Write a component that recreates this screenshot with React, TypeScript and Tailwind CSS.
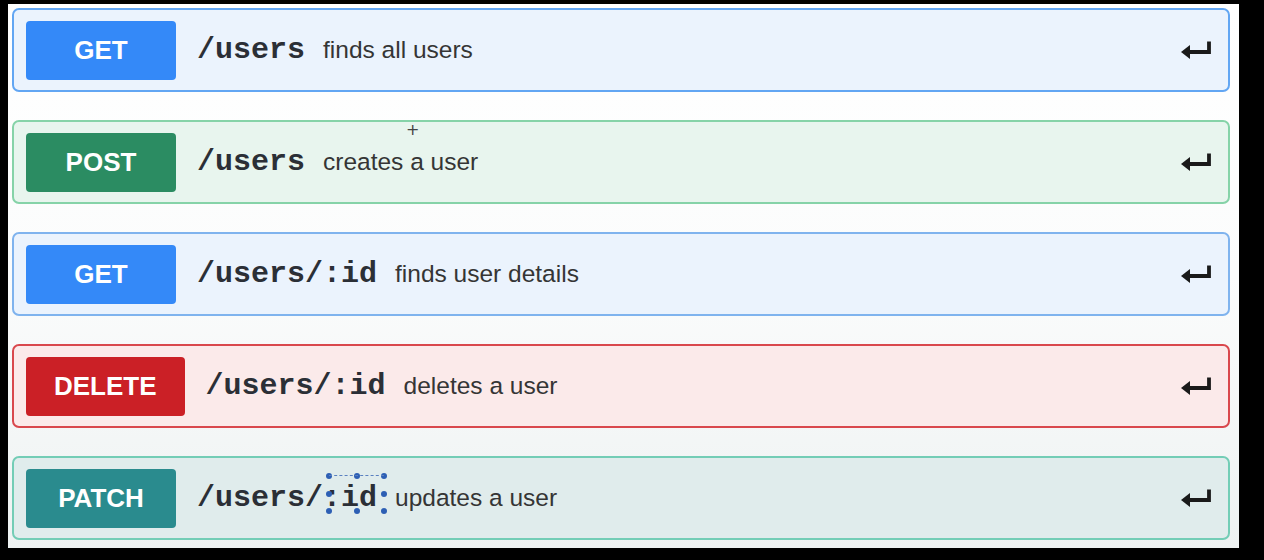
import React from "react";

type Row = {
  method: string;
  path: string;
  desc: string;
  badge: string;
  card: string;
  extra?: "cursor" | "select";
};

const rows: Row[] = [
  { method: "GET", path: "/users", desc: "finds all users", badge: "bg-[#3489f8]", card: "bg-[#ebf3fd] border-[#62a6f3]" },
  { method: "POST", path: "/users", desc: "creates a user", badge: "bg-[#2b8c62]", card: "bg-[#e8f5ee] border-[#86d3a8]", extra: "cursor" },
  { method: "GET", path: "/users/:id", desc: "finds user details", badge: "bg-[#3489f8]", card: "bg-[#ebf3fd] border-[#7fb3ee]" },
  { method: "DELETE", path: "/users/:id", desc: "deletes a user", badge: "bg-[#cb2026]", card: "bg-[#fbeaea] border-[#d9484d]" },
  { method: "PATCH", path: "/users/:id", desc: "updates a user", badge: "bg-[#2a8b8e]", card: "bg-[#e0ecec] border-[#73cdb6]", extra: "select" },
];

function EnterIcon() {
  return (
    <svg width="32" height="20" viewBox="0 0 32 20" className="shrink-0">
      <path d="M29 1.5 V12 H8" fill="none" stroke="#1a1a1a" strokeWidth="3.8" />
      <path d="M1 12 L10 5 L10 19 Z" fill="#1a1a1a" />
    </svg>
  );
}

function Dot() {
  return <span className="block w-[6px] h-[6px] rounded-full bg-[#2d5fb4]" />;
}

function SelectedId() {
  return (
    <span className="relative">
      :id
      <span className="absolute left-[3px] right-[-10px] top-[-8px] h-[41px] flex flex-col justify-between">
        <span className="relative flex justify-between items-center">
          <span className="absolute left-[3px] right-[3px] top-[2px] border-t border-dashed border-[#5a80c0]" />
          <Dot />
          <Dot />
          <Dot />
        </span>
        <span className="flex justify-between">
          <Dot />
          <Dot />
        </span>
        <span className="flex justify-between">
          <Dot />
          <Dot />
          <Dot />
        </span>
      </span>
    </span>
  );
}

export default function App() {
  return (
    <div className="w-[1264px] h-[560px] bg-black pt-[4px] pl-[8px] pr-[25px] pb-[12px] overflow-hidden">
      <div className="h-full bg-gradient-to-b from-white via-[#fbfcfc] to-[#eef2f2] pl-[4px] pr-[9px] pt-[4px] flex flex-col gap-[28px]">
        {rows.map((r, i) => (
          <div
            key={i}
            className={`relative h-[84px] shrink-0 border-2 rounded-[7px] flex items-center pl-[12px] pr-[16px] ${r.card}`}
          >
            <div
              className={`h-[59px] min-w-[150px] px-[28px] rounded-[4px] flex items-center justify-center text-white font-bold text-[26px] ${r.badge}`}
              style={{ fontFamily: '"Liberation Sans", Arial, sans-serif' }}
            >
              {r.method}
            </div>
            <div className="ml-[21px] flex items-center gap-[18px] flex-1">
              <span
                className="text-[30px] font-bold text-[#2b2f36] leading-none"
                style={{ fontFamily: '"Liberation Mono", "Courier New", monospace' }}
              >
                {r.extra === "select" ? (
                  <>
                    /users/
                    <SelectedId />
                  </>
                ) : (
                  r.path
                )}
              </span>
              <span
                className="text-[24.5px] text-[#353535] leading-none"
                style={{ fontFamily: '"Liberation Sans", Arial, sans-serif' }}
              >
                {r.desc}
              </span>
            </div>
            <EnterIcon />
            {r.extra === "cursor" && (
              <span
                className="absolute left-[392px] top-[0px] text-[16px] text-[#444] leading-none"
                style={{ fontFamily: '"DejaVu Sans", sans-serif' }}
              >
                +
              </span>
            )}
          </div>
        ))}
      </div>
    </div>
  );
}
